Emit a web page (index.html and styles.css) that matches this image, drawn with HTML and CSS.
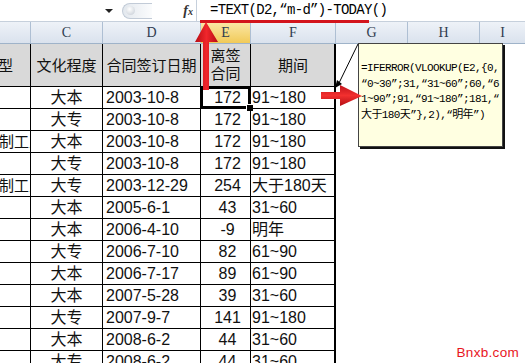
FILE: index.html
```html
<!DOCTYPE html>
<html lang="zh-CN">
<head>
    <meta charset="UTF-8">
    <meta name="viewport" content="width=device-width, initial-scale=1.0">
    <title>合同期间</title>
    <link rel="stylesheet" href="styles.css">
</head>
<body>
    <div class="screen">
        <!-- formula bar -->
        <div class="formula-bar">
            <div class="name-box"><span class="drop"></span></div>
            <div class="bar-tools">
                <span class="grip"><span class="knob"></span></span>
                <span class="fx">f<small>x</small></span>
            </div>
            <div class="formula">=TEXT(D2,“m-d”)-TODAY()</div>
        </div>

        <!-- column letters -->
        <div class="col-heads">
            <div></div>
            <div>C</div>
            <div>D</div>
            <div class="active">E</div>
            <div>F</div>
            <div>G</div>
            <div>H</div>
            <div class="last">I</div>
        </div>

        <!-- sheet -->
        <div class="sheet">
            <div class="row head">
                <div class="cell b">类型</div>
                <div class="cell">文化程度</div>
                <div class="cell">合同签订日期</div>
                <div class="cell two">离签<br>合同</div>
                <div class="cell f">期间</div>
            </div>
            <div class="row">
                <div class="cell b"></div><div class="cell c">大本</div><div class="cell d">2003-10-8</div><div class="cell e sel">172</div><div class="cell f">91~180</div>
            </div>
            <div class="row">
                <div class="cell b"></div><div class="cell c">大专</div><div class="cell d">2003-10-8</div><div class="cell e">172</div><div class="cell f">91~180</div>
            </div>
            <div class="row">
                <div class="cell b clip">编制工人</div><div class="cell c">大本</div><div class="cell d">2003-10-8</div><div class="cell e">172</div><div class="cell f">91~180</div>
            </div>
            <div class="row">
                <div class="cell b"></div><div class="cell c">大专</div><div class="cell d">2003-10-8</div><div class="cell e">172</div><div class="cell f">91~180</div>
            </div>
            <div class="row">
                <div class="cell b clip">编制工人</div><div class="cell c">大专</div><div class="cell d">2003-12-29</div><div class="cell e">254</div><div class="cell f">大于180天</div>
            </div>
            <div class="row">
                <div class="cell b"></div><div class="cell c">大本</div><div class="cell d">2005-6-1</div><div class="cell e">43</div><div class="cell f">31~60</div>
            </div>
            <div class="row">
                <div class="cell b"></div><div class="cell c">大本</div><div class="cell d">2006-4-10</div><div class="cell e">-9</div><div class="cell f">明年</div>
            </div>
            <div class="row">
                <div class="cell b"></div><div class="cell c">大专</div><div class="cell d">2006-7-10</div><div class="cell e">82</div><div class="cell f">61~90</div>
            </div>
            <div class="row">
                <div class="cell b"></div><div class="cell c">大本</div><div class="cell d">2006-7-17</div><div class="cell e">89</div><div class="cell f">61~90</div>
            </div>
            <div class="row">
                <div class="cell b"></div><div class="cell c">大本</div><div class="cell d">2007-5-28</div><div class="cell e">39</div><div class="cell f">31~60</div>
            </div>
            <div class="row">
                <div class="cell b"></div><div class="cell c">大专</div><div class="cell d">2007-9-7</div><div class="cell e">141</div><div class="cell f">91~180</div>
            </div>
            <div class="row">
                <div class="cell b"></div><div class="cell c">大本</div><div class="cell d">2008-6-2</div><div class="cell e">44</div><div class="cell f">31~60</div>
            </div>
            <div class="row">
                <div class="cell b"></div><div class="cell c">大专</div><div class="cell d">2008-6-2</div><div class="cell e">44</div><div class="cell f">31~60</div>
            </div>
        </div>

        <!-- cell comment -->
        <div class="note">=IFERROR(VLOOKUP(E2,{0,
“0~30”;31,“31~60”;60,“6
1~90”;91,“91~180”;181,“
大于180天”},2),“明年”)</div>

        <!-- red marks drawn over the screenshot -->
        <svg class="marks" width="525" height="363" viewBox="0 0 525 363">
            <defs>
                <linearGradient id="redV" x1="0" y1="0" x2="1" y2="0">
                    <stop offset="0" stop-color="#b80d13"/>
                    <stop offset="0.5" stop-color="#f0262c"/>
                    <stop offset="1" stop-color="#b80d13"/>
                </linearGradient>
                <linearGradient id="redH" x1="0" y1="0" x2="0" y2="1">
                    <stop offset="0" stop-color="#c0121a"/>
                    <stop offset="0.5" stop-color="#f2302f"/>
                    <stop offset="1" stop-color="#b50e14"/>
                </linearGradient>
            </defs>
            <rect x="200" y="20" width="169" height="3" fill="#d3141c"/>
            <path d="M203 90 V42 H195 L206 22 L218 42 H209 V90 Z" fill="url(#redV)"/>
            <line x1="358" y1="44" x2="339" y2="83" stroke="#000" stroke-width="1"/>
            <path d="M335 88 L337 80 L342 84 Z" fill="#000"/>
            <path d="M321 92 H340 V85 L362 96 L340 106 V99 H321 Z" fill="url(#redH)"/>
        </svg>

        <div class="stamp">Bnxb.com</div>
    </div>
</body>
</html>
```

FILE: styles.css
```css
/* Global */
* {
    margin: 0;
    padding: 0;
    box-sizing: border-box;
}

body {
    background: #fff;
    font-family: "Liberation Sans", "Noto Sans CJK SC", sans-serif;
    color: #111;
}

.screen {
    position: relative;
    width: 525px;
    height: 363px;
    overflow: hidden;
}

/* Formula bar */
.formula-bar {
    display: flex;
    height: 22px;
    border-bottom: 1px solid #c6d0dc;
}

.name-box {
    width: 118px;
    display: flex;
    justify-content: flex-end;
    align-items: center;
    padding-right: 5px;
}

.drop {
    width: 0;
    height: 0;
    border-left: 4px solid transparent;
    border-right: 4px solid transparent;
    border-top: 4px solid #222;
}

.bar-tools {
    width: 78px;
    display: flex;
    align-items: center;
    justify-content: space-between;
    padding: 0 3px 0 4px;
}

.grip {
    width: 30px;
    height: 16px;
    border: 1px solid #c2cbd7;
    border-right: none;
    border-radius: 8px 0 0 8px;
    background: linear-gradient(90deg, #e3e8ee, #fbfcfd);
    display: flex;
    align-items: center;
    padding-left: 3px;
}

.knob {
    width: 9px;
    height: 9px;
    border-radius: 50%;
    background: radial-gradient(circle at 40% 35%, #fff, #c3cad3);
}

.fx {
    font-family: "Liberation Serif", serif;
    font-style: italic;
    font-weight: bold;
    font-size: 14px;
    color: #333;
}

.fx small {
    font-size: 10px;
}

.formula {
    flex: 1;
    border-left: 1px solid #c6d0dc;
    padding-left: 13px;
    font-family: "Liberation Mono", monospace;
    font-size: 14px;
    letter-spacing: -0.7px;
    line-height: 21px;
    color: #000;
    white-space: nowrap;
}

/* Column letters */
.col-heads {
    display: grid;
    grid-template-columns: 31px 72px 98px 50px 85px 72px 72px 1fr;
    height: 22px;
    background: linear-gradient(#eef2f8, #dae2ed);
    border-bottom: 1px solid #9fb3c9;
}

.col-heads div {
    border-right: 1px solid #aebfd3;
    text-align: center;
    font-family: "Liberation Serif", serif;
    font-size: 14px;
    line-height: 21px;
    color: #2f3c4f;
}

.col-heads .active {
    background: linear-gradient(#fbe8a8, #f1ca58);
}

.col-heads .last {
    border-right: none;
}

/* Sheet */
.row {
    display: grid;
    grid-template-columns: 31px 72px 98px 50px 85px;
    height: 22px;
}

.cell {
    position: relative;
    border-right: 1px solid #000;
    border-bottom: 1px solid #000;
    overflow: hidden;
    white-space: nowrap;
    font-size: 16px;
    line-height: 21px;
}

.cell.f {
    border-right-width: 2px;
    padding-left: 1px;
}

.cell.c {
    text-align: center;
}

.cell.d {
    padding-left: 3px;
}

.cell.e {
    text-align: center;
    padding-left: 4px;
}

.cell.clip {
    text-indent: -16px;
    font-size: 15px;
}

.row.head {
    height: 43px;
}

.row.head .cell {
    background: #d9d9d9;
    font-size: 15px;
    display: flex;
    align-items: center;
    justify-content: center;
}

.row.head .cell.b {
    justify-content: flex-end;
    padding-right: 17px;
}

.row.head .cell.two {
    line-height: 18px;
    text-align: center;
}

.cell.sel {
    overflow: visible;
    box-shadow: inset 0 0 0 2px #000, inset 0 0 0 3px #fff;
}

.cell.sel::after {
    content: "";
    position: absolute;
    right: -4px;
    bottom: -4px;
    width: 6px;
    height: 6px;
    background: #000;
    border: 1px solid #fff;
}

/* Comment box */
.note {
    position: absolute;
    left: 358px;
    top: 43px;
    width: 145px;
    height: 104px;
    background: #ffffe1;
    border: 1px solid #444;
    box-shadow: 2px 2px 0 #111;
    padding: 17px 0 0 2px;
    font-family: "Liberation Mono", "Noto Sans CJK SC", monospace;
    font-size: 11px;
    letter-spacing: -0.6px;
    line-height: 15.5px;
    white-space: pre;
    color: #000;
    overflow: hidden;
}

.marks {
    position: absolute;
    top: 0;
    left: 0;
    pointer-events: none;
}

.stamp {
    position: absolute;
    right: 6px;
    bottom: 3px;
    font-size: 13.5px;
    color: #e8151d;
    letter-spacing: 0.3px;
}
```
